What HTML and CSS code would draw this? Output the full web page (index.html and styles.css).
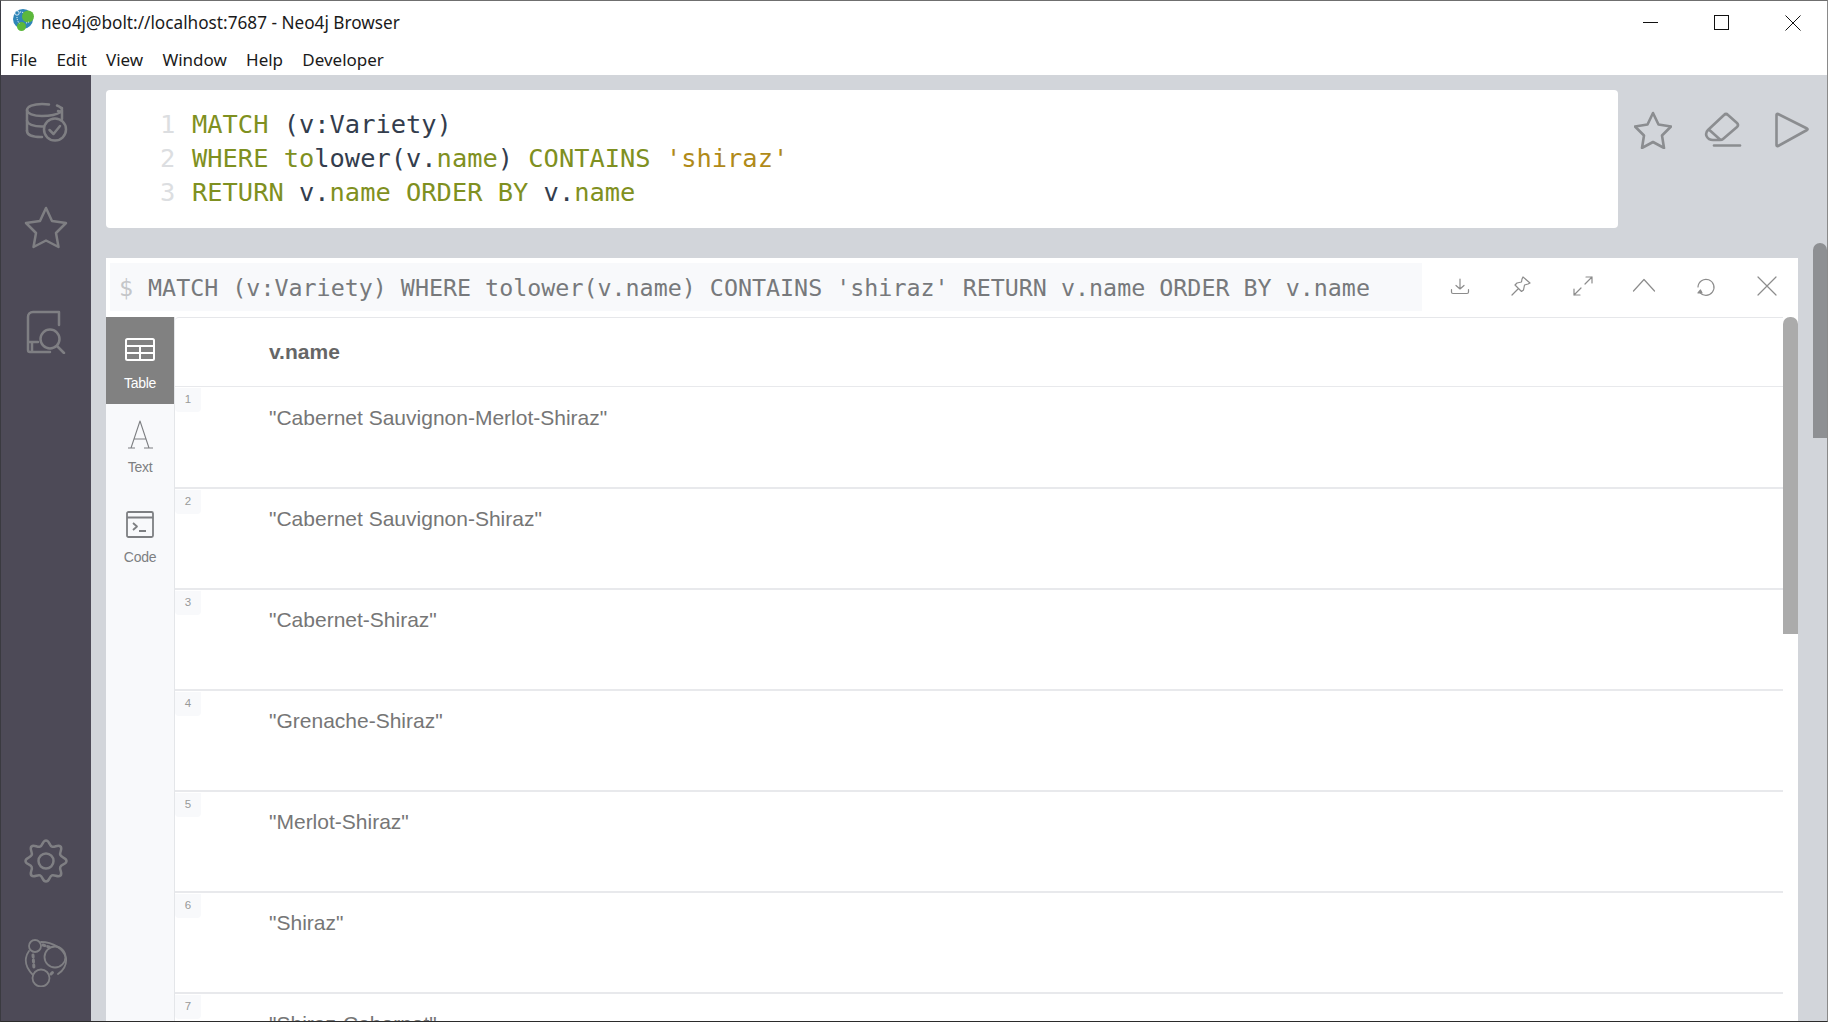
FILE: index.html
```html
<!DOCTYPE html>
<html lang="en">
<head>
<meta charset="utf-8">
<title>neo4j@bolt://localhost:7687 - Neo4j Browser</title>
<link rel="stylesheet" href="styles.css">
</head>
<body>
<div class="window">
  <header class="chrome">
    <div class="titlebar">
      <svg class="logo" viewBox="0 0 24 24" width="24" height="24">
        <circle cx="11" cy="11" r="10" fill="#2f86b8"/>
        <circle cx="16" cy="8.5" r="6" fill="#5cb83c"/>
        <circle cx="9.5" cy="18.5" r="4.5" fill="#5cb83c"/>
        <circle cx="5" cy="5" r="2.2" fill="#2f86b8" stroke="#fff" stroke-width=".8"/>
        <path d="M8 4c2 0 3 .5 4 1M5 9c0 3 1 5 3 7M14 15c1 0 2-1 3-1" fill="none" stroke="#fff" stroke-width=".9" stroke-dasharray="1 1"/>
      </svg>
      <span class="title">neo4j@bolt://localhost:7687 - Neo4j Browser</span>
      <div class="winctl">
        <svg viewBox="0 0 16 16" width="16" height="16"><path d="M0 7.500h15" stroke="#111" fill="none"/></svg>
        <svg viewBox="0 0 16 16" width="16" height="16"><rect x=".5" y=".5" width="14" height="14" stroke="#111" fill="none"/></svg>
        <svg viewBox="0 0 16 16" width="16" height="16"><path d="M.5.5l15 15M15.500.5l-15 15" stroke="#111" fill="none"/></svg>
      </div>
    </div>
    <nav class="menu">
      <span>File</span><span>Edit</span><span>View</span><span>Window</span><span>Help</span><span>Developer</span>
    </nav>
  </header>
  <div class="body">
    <aside class="sidebar">
      <div class="side-group">
        <div class="side-item">
          <svg viewBox="0 0 44 44" width="44" height="44" class="side-ico side-db">
            <path d="M25 4.500c-2-.4-5-.6-7-.6C9.500 3.900 3 6.500 3 10v21c0 3.500 5 6 14 6h1"/>
            <path d="M3 10c0 3.500 6.500 6 15 6 8 0 15-1.500 19-4M3 20.500c0 3.500 6.500 6 15 6h2M3 31c0-1 0 0 0 0"/>
            <path d="M33 5.500c3 1.200 5 2.700 5 4.500v9M34 11l3.500 1 .5-4"/>
            <circle cx="31" cy="29.500" r="11"/>
            <path d="M25.500 30l4 4 6.500-8"/>
          </svg>
        </div>
        <div class="side-item">
          <svg viewBox="0 0 44 44" width="44" height="44" class="side-ico"><path d="M22 3l6 13 14 2-10 10 2.500 14L22 35.500 9.500 42 12 28 2 18l14-2z"/></svg>
        </div>
        <div class="side-item">
          <svg viewBox="0 0 44 44" width="44" height="44" class="side-ico">
            <path d="M35 2H9C6 2 4 4 4 7v33c0 1.500 1 2 2 2h20M35 2v13M4 32h10M8 32v10"/>
            <circle cx="26" cy="29" r="9.500"/>
            <path d="M33 36l7 7"/>
          </svg>
        </div>
      </div>
      <div class="side-group">
        <div class="side-item">
          <svg viewBox="0 0 44 44" width="44" height="44" class="side-ico">
            <path d="M42.500 22C42.500 25.500 37.450 25.130 36.300 27.900C35.150 30.670 38.970 34.030 36.500 36.500C34.030 38.970 30.710 35.170 27.940 36.320C25.170 37.470 25.500 42.500 22 42.500C18.500 42.500 18.830 37.470 16.060 36.320C13.290 35.170 9.970 38.970 7.500 36.500C5.030 34.030 8.850 30.670 7.700 27.900C6.550 25.130 1.500 25.500 1.500 22C1.500 18.500 6.550 18.870 7.700 16.100C8.850 13.330 5.030 9.970 7.500 7.500C9.970 5.030 13.290 8.830 16.060 7.680C18.830 6.530 18.500 1.500 22 1.500C25.500 1.500 25.170 6.530 27.940 7.680C30.710 8.830 34.030 5.030 36.500 7.500C38.970 9.970 35.150 13.330 36.300 16.100C37.450 18.870 42.500 18.500 42.500 22Z"/>
            <circle cx="22" cy="22" r="7.500"/>
          </svg>
        </div>
        <div class="side-item side-last">
          <svg viewBox="0 0 44 50" width="44" height="50" class="side-ico thin">
            <circle cx="11" cy="9" r="6"/>
            <circle cx="31" cy="20" r="10.500"/>
            <circle cx="17" cy="41" r="8.500"/>
            <path d="M17 5c12 0 23 7 25 16 1 7-3 13-8 16M9 38C4 33 1 27 2 21c.5-3 1.500-5 3-7"/>
            <path d="M19 8l6 2M9 18l1 14M27 37l3-3" stroke-dasharray="2 3" stroke-width="3"/>
          </svg>
        </div>
      </div>
    </aside>
    <main class="workspace">
      <section class="editor-row">
        <div class="editor">
          <div class="line"><span class="gut">1</span><span class="kw">MATCH</span> (v:Variety)</div>
          <div class="line"><span class="gut">2</span><span class="kw">WHERE to</span>lower(v.<span class="kw">name</span>) <span class="kw">CONTAINS</span> <span class="str">'shiraz'</span></div>
          <div class="line"><span class="gut">3</span><span class="kw">RETURN</span> v.<span class="kw">name</span> <span class="kw">ORDER BY</span> v.<span class="kw">name</span></div>
        </div>
        <div class="editor-actions">
          <svg viewBox="0 0 38 38" width="38" height="38" class="act"><path d="M19 2l5.500 11.500 12.500 2-9 9 2 12.500L19 31l-11 6 2-12.500-9-9 12.500-2z"/></svg>
          <svg viewBox="0 0 38 38" width="38" height="38" class="act"><path d="M20 4q2-2 4 0l9 8q2 2 0 4L19 28q-1 1-3 1H9c-6 0-9-6-5-10z"/><path d="M6 19.500l10 9"/><path d="M10 34.500h26"/></svg>
          <svg viewBox="0 0 38 38" width="38" height="38" class="act"><path d="M4 3l29 14.500c.8.500.8 1 0 1.500L4 35c-1 .5-1.500 0-1.500-1V4c0-1 .5-1.500 1.500-1z"/></svg>
        </div>
      </section>
      <section class="frame">
        <div class="frame-head">
          <div class="cmd"><span class="dollar">$</span><span>MATCH (v:Variety) WHERE tolower(v.name) CONTAINS 'shiraz' RETURN v.name ORDER BY v.name</span></div>
          <div class="frame-actions">
            <svg viewBox="0 0 20 20" width="20" height="20" class="fa"><path d="M10 3v10M6 9.500l4 3.500 4-3.500M1.500 13.500V16c0 .8.700 1.500 1.500 1.500h14c.8 0 1.500-.7 1.500-1.500v-2.500"/></svg>
            <svg viewBox="0 0 20 20" width="20" height="20" class="fa"><path d="M1 19l6-6M12 1l7 6-2 1-3.500 1-1 5-2 1.500L4 9l2-2 4.500-1 .5-3z"/></svg>
            <svg viewBox="0 0 20 20" width="20" height="20" class="fa"><path d="M1 19l7-7M1 13v6h6M19 1l-7 7M13 1h6v6"/></svg>
            <svg viewBox="0 0 20 20" width="20" height="20" class="fa"><path d="M-.5 15L10 3.500 20.500 15"/></svg>
            <svg viewBox="0 0 20 20" width="20" height="20" class="fa"><path d="M3.500 16a8 8 0 1 0-1.500-5"/><path d="M2 17h4l-1.500-3z" fill="#888"/></svg>
            <svg viewBox="0 0 20 20" width="20" height="20" class="fa"><path d="M1 1l18 18M19 1L1 19"/></svg>
          </div>
        </div>
        <div class="frame-body">
          <div class="tabs">
            <div class="tab active">
              <svg viewBox="0 0 30 24" width="30" height="24" class="tab-ico"><rect x="1" y="1" width="28" height="21" rx="1.500"/><path d="M1 8h28M1 15h28M15 8v14"/></svg>
              <span>Table</span>
            </div>
            <div class="tab">
              <svg viewBox="0 0 28 30" width="28" height="30" class="tab-ico thin"><path d="M2 28h7M18 28h9M5 28L14 1l9 27M8 19h12"/></svg>
              <span>Text</span>
            </div>
            <div class="tab">
              <svg viewBox="0 0 28 28" width="28" height="28" class="tab-ico"><rect x="1" y="1" width="26" height="25" rx="1.500"/><path d="M1 6.500h26M7 12l4 3.500-4 3.500M13 20h7"/></svg>
              <span>Code</span>
            </div>
          </div>
          <div class="result">
            <div class="thead">v.name</div>
            <div class="row"><span class="num">1</span><span class="val">"Cabernet Sauvignon-Merlot-Shiraz"</span></div>
            <div class="row"><span class="num">2</span><span class="val">"Cabernet Sauvignon-Shiraz"</span></div>
            <div class="row"><span class="num">3</span><span class="val">"Cabernet-Shiraz"</span></div>
            <div class="row"><span class="num">4</span><span class="val">"Grenache-Shiraz"</span></div>
            <div class="row"><span class="num">5</span><span class="val">"Merlot-Shiraz"</span></div>
            <div class="row"><span class="num">6</span><span class="val">"Shiraz"</span></div>
            <div class="row"><span class="num">7</span><span class="val">"Shiraz-Cabernet"</span></div>
          </div>
          <div class="inner-track"><div class="inner-thumb"></div></div>
        </div>
      </section>
      <div class="outer-thumb"></div>
    </main>
  </div>
</div>
</body>
</html>
```

FILE: styles.css
```css
* { box-sizing: border-box; }
html, body { margin: 0; padding: 0; background: #fff; overflow: hidden; }
.window {
  width: 1828px; height: 1022px; display: flex; flex-direction: column; overflow: hidden;
  border-top: 1px solid #6f6f6f; border-right: 1px solid #8a8a8a; border-bottom: 1px solid #2b2b2b; border-left: 1px solid #3a3a40;
  font-family: "Noto Sans", "Open Sans", sans-serif;
}
.chrome { height: 74px; flex: none; background: #fff; color: #1a1a1a; }
.titlebar { height: 43px; display: flex; align-items: center; padding-left: 11px; }
.logo { flex: none; margin-top: -6px; }
.title { margin-left: 5px; font-size: 17.200px; white-space: nowrap; }
.winctl { margin-left: auto; display: flex; gap: 55px; padding-right: 26px; align-items: center; }
.menu { height: 31px; display: flex; align-items: center; padding-left: 9px; font-size: 17px; gap: 19.200px; }
.body { flex: 1; min-height: 0; display: flex; background: #d2d5da; }
.sidebar { width: 90px; flex: none; background: #4d4a57; display: flex; flex-direction: column; justify-content: space-between; padding-top: 25px; }
.side-group { display: flex; flex-direction: column; }
.side-item { height: 105px; display: flex; justify-content: center; }
.side-group:last-child .side-item { height: 98px; }
.side-group:last-child .side-last { height: 84px; }
.side-ico { fill: none; stroke: #7f7f83; stroke-width: 2.500; stroke-linecap: round; stroke-linejoin: round; }
.side-ico.thin { stroke-width: 1.800; }
.workspace { flex: 1; min-width: 0; position: relative; padding: 15px 29px 0 15px; overflow: hidden; display: flex; flex-direction: column; gap: 30px; }
.editor-row { display: flex; flex: none; }
.editor { width: 1512px; height: 138px; flex: none; background: #fff; border-radius: 4px; padding: 17px 0 0; font-family: "DejaVu Sans Mono", monospace; font-size: 25.400px; color: #333d4d; }
.line { height: 34px; line-height: 34px; white-space: pre; }
.gut { display: inline-block; width: 86px; padding-left: 54px; color: #dcdee1; }
.kw { color: #7f9021; }
.str { color: #b08a18; }
.editor-actions { display: flex; gap: 32px; padding: 21px 0 0 16px; }
.act { fill: none; stroke: #8b8d90; stroke-width: 2.600; stroke-linecap: round; stroke-linejoin: round; }
.frame { flex: 1; min-height: 0; background: #fff; display: flex; flex-direction: column; }
.frame-head { height: 59px; flex: none; display: flex; padding: 5px 0 0 4px; }
.cmd { width: 1312px; height: 48px; flex: none; background: #f8f9fb; font-family: "DejaVu Sans Mono", monospace; font-size: 23.330px; line-height: 50px; color: #77797c; white-space: nowrap; overflow: hidden; display: flex; gap: 15px; padding-left: 9px; }
.dollar { color: #c4c6c9; }
.frame-actions { display: flex; align-items: center; gap: 41.400px; padding: 0 0 8px 28px; }
.fa { fill: none; stroke: #8c8c8c; stroke-width: 1.200; stroke-linecap: round; stroke-linejoin: round; overflow: visible; }
.frame-body { flex: 1; min-height: 0; display: flex; }
.tabs { width: 69px; flex: none; background: #f8f9fb; display: flex; flex-direction: column; border-right: 1px solid #e4e6e9; }
.tab { display: flex; flex-direction: column; align-items: center; height: 90px; color: #7d7f82; font-family: "Liberation Sans", Arial, sans-serif; font-size: 14px; letter-spacing: -.3px; }
.tab.active { height: 87px; background: #818181; color: #fff; padding-top: 21px; gap: 13px; }
.tab:nth-child(2) { padding-top: 16px; gap: 9px; }
.tab:nth-child(3) { padding-top: 17px; gap: 10px; }
.tab-ico { fill: none; stroke: #7d7f82; stroke-width: 1.800; stroke-linejoin: round; flex: none; }
.tab.active .tab-ico { stroke: #fff; stroke-width: 2; }
.tab-ico.thin { stroke-width: 1.100; }
.result { flex: 1; min-width: 0; font-family: "Liberation Sans", Arial, sans-serif; border-top: 1px solid #e6e7ea; border-top-left-radius: 4px; overflow: hidden; }
.thead { height: 68px; line-height: 68px; padding-left: 94px; font-size: 21px; font-weight: 700; color: #666; }
.row { height: 101px; border-top: 1px solid #e8e9ec; position: relative; padding: 15px 0 0 94px; font-size: 21px; line-height: 30px; color: #767676; }
.row:nth-child(2) { padding-top: 16px; }
.row:nth-child(n+3) { border-top-width: 2px; }
.num { position: absolute; left: 0; top: 1px; width: 26px; height: 24px; background: #f8f9fb; border-radius: 0 0 4px 4px; font-size: 11.500px; line-height: 22px; text-align: center; color: #999; }
.inner-track { width: 15px; flex: none; background: #fff; }
.inner-thumb { height: 317px; background: #ababab; border-radius: 7px 7px 0 0; }
.outer-thumb { position: absolute; right: 0; top: 168px; width: 14px; height: 195px; background: #8e9093; border-radius: 7px 7px 0 0; }
```
